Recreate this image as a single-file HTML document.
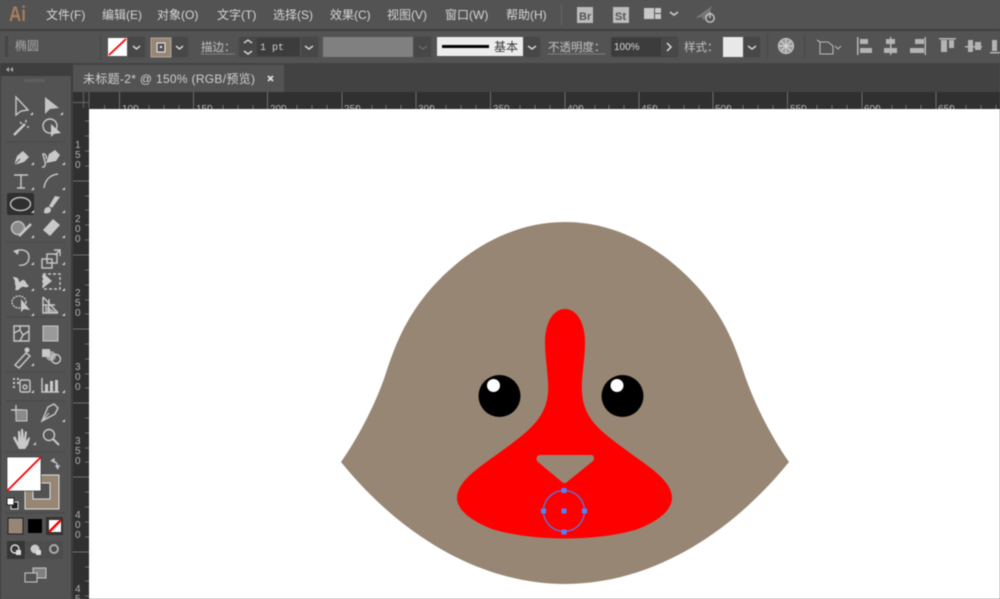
<!DOCTYPE html>
<html><head><meta charset="utf-8"><style>
html,body{margin:0;padding:0;background:#535353;width:1000px;height:599px;overflow:hidden}
svg{display:block;filter:blur(.4px)}
text{font-family:"Liberation Sans","Noto Sans CJK SC",sans-serif}
.m{font-size:12px;fill:#d6d6d6}
.c{font-size:11.5px;fill:#c4c4c4}
.r{font-size:10px;fill:#b4b4b4}
.i{fill:none;stroke:#c9c9c9;stroke-width:1.4}
.f{fill:#c9c9c9}
.d{fill:none;stroke:#d0d0d0;stroke-width:1.5}
.b{fill:#474747;stroke:#4a4a4a}
</style></head><body>
<svg width="1000" height="599" viewBox="0 0 1000 599" xmlns="http://www.w3.org/2000/svg">
<rect width="1000" height="599" fill="#fff"/>
<!-- menu bar -->
<rect width="1000" height="30" fill="#535353"/>
<rect y="29" width="1000" height="2" fill="#3f3f3f"/>
<rect y="31" width="1000" height="32" fill="#535353"/>
<rect y="63" width="1000" height="29" fill="#424242"/>
<text x="9" y="21" font-weight="bold" fill="#a87c5c" style="font-size:21px" textLength="17" lengthAdjust="spacingAndGlyphs">Ai</text>
<text class="m" x="46" y="19">文件(F)</text>
<text class="m" x="102" y="19">编辑(E)</text>
<text class="m" x="157" y="19">对象(O)</text>
<text class="m" x="217" y="19">文字(T)</text>
<text class="m" x="273" y="19">选择(S)</text>
<text class="m" x="330" y="19">效果(C)</text>
<text class="m" x="387" y="19">视图(V)</text>
<text class="m" x="445" y="19">窗口(W)</text>
<text class="m" x="506" y="19">帮助(H)</text>
<rect x="561" y="5" width="1" height="20" fill="#666"/>
<rect x="577" y="7" width="16" height="16" fill="#bcbcbc"/>
<text x="579" y="20" fill="#555" font-weight="bold" style="font-size:11px">Br</text>
<rect x="613" y="7" width="16" height="16" fill="#bcbcbc"/>
<text x="615" y="20" fill="#555" font-weight="bold" style="font-size:11px">St</text>
<rect x="644" y="8" width="10" height="11" fill="#c8c8c8"/>
<rect x="655" y="8" width="6" height="5" fill="#c8c8c8"/>
<rect x="655" y="14" width="6" height="5" fill="#c8c8c8"/>
<path class="d" d="M670 12l4 3 4-3"/>
<path d="M695 18L712 6l-4 11-5 3-1-3z" fill="#777"/>
<circle cx="710" cy="18" r="4.200" fill="none" stroke="#c4c4c4" stroke-width="1.400"/>
<path d="M710 12v6" stroke="#c4c4c4" stroke-width="1.400"/>
<!-- control bar -->
<rect x="5" y="36" width="3" height="21" fill="#454545"/>
<text x="15" y="50" fill="#a9a9a9" style="font-size:12px">椭圆</text>
<rect x="100" y="34" width="1" height="26" fill="#474747"/>
<rect x="108" y="38" width="19" height="18" fill="#fff"/>
<path d="M109 55L126 39" stroke="#f00" stroke-width="1.800"/>
<rect class="b" x="128" y="37" width="17" height="20" rx="2"/>
<path class="d" d="M133 46l3.500 3 3.500-3"/>
<rect x="151" y="38" width="20" height="19" fill="#988674" stroke="#ccc" stroke-width=".6"/>
<rect x="157" y="43" width="8" height="9" fill="#555" stroke="#eee" stroke-width="1"/>
<rect x="160" y="46" width="2" height="2" fill="#eee"/>
<rect class="b" x="172" y="37" width="16" height="20" rx="2"/>
<path class="d" d="M176 46l3.500 3 3.500-3"/>
<text class="c" x="201" y="51">描边：</text>
<path d="M201 54h33" stroke="#aaa" stroke-dasharray="1 1"/>
<rect class="b" x="239" y="37" width="79" height="20" rx="2" fill="#404040"/>
<rect x="257" y="38" width="43" height="18" fill="#3c3c3c"/>
<rect x="300" y="38" width="1" height="18" fill="#555"/>
<path class="d" d="M244 43l4-3 4 3M244 51l4 3 4-3"/>
<text x="260" y="50" fill="#d0d0d0" style="font-size:10px;font-family:'Liberation Mono',monospace">1 pt</text>
<path class="d" d="M305 46l4 3 4-3"/>
<rect x="323" y="37" width="90" height="20" fill="#808080"/>
<rect class="b" x="414" y="37" width="17" height="20"/>
<path d="M419 46l4 3 4-3" fill="none" stroke="#6c6c6c" stroke-width="1.400"/>
<rect x="437" y="37" width="86" height="19" fill="#ececec"/>
<rect x="442" y="45" width="47" height="3" fill="#000"/>
<text x="494" y="51" fill="#333" style="font-size:12px">基本</text>
<rect class="b" x="524" y="37" width="16" height="20" rx="2"/>
<path class="d" d="M528 46l4 3 4-3"/>
<text class="c" x="548" y="51">不透明度：</text>
<path d="M548 54h57" stroke="#aaa" stroke-dasharray="1 1"/>
<rect x="611" y="37" width="67" height="20" rx="2" fill="#3c3c3c" stroke="#4a4a4a"/>
<rect x="661" y="38" width="17" height="18" fill="#484848"/>
<text x="614" y="50" fill="#d8d8d8" style="font-size:10px">100%</text>
<path d="M667 43l4 4-4 4" fill="none" stroke="#ddd" stroke-width="1.500"/>
<text class="c" x="684" y="51">样式：</text>
<rect x="723" y="37" width="20" height="20" fill="#e8e8e8"/>
<rect class="b" x="744" y="37" width="16" height="20" rx="2"/>
<path class="d" d="M748 46l4 3 4-3"/>
<rect x="767" y="34" width="1" height="25" fill="#474747"/>
<circle cx="786" cy="46" r="7.500" fill="#9a9a9a" stroke="#c0c0c0" stroke-width="1.200"/>
<path d="M779 46h14M786 39v14M781 41l10 10M791 41l-10 10" stroke="#d8d8d8" stroke-width=".9"/>
<rect x="804" y="34" width="1" height="25" fill="#474747"/>
<path d="M820 42h8l5 4v8h-13zM817 40l3 2" fill="none" stroke="#b8b8b8" stroke-width="1.100"/>
<path d="M835 46l3 3 3-3" fill="none" stroke="#b8b8b8" stroke-width="1"/>
<g fill="#b4b4b4">
<rect x="857" y="37" width="1.500" height="18"/><rect x="860" y="39" width="8" height="5"/><rect x="860" y="48" width="12" height="5"/>
<rect x="890" y="37" width="1.500" height="18"/><rect x="886" y="39" width="9" height="5"/><rect x="884" y="48" width="13" height="5"/>
<rect x="924.500" y="37" width="1.500" height="18"/><rect x="915" y="39" width="9" height="5"/><rect x="910" y="48" width="14" height="5"/>
<rect x="939" y="38" width="17" height="1.500"/><rect x="941" y="40" width="6" height="12"/><rect x="949" y="40" width="5" height="8"/>
<rect x="965" y="46" width="17" height="1.500"/><rect x="968" y="40" width="5" height="12"/><rect x="975" y="42" width="6" height="8"/>
<rect x="990" y="52" width="10" height="1.500"/><rect x="992" y="40" width="5" height="11"/>
</g>
<!-- left panel -->
<rect x="0" y="63" width="73" height="536" fill="#3e3e3e"/>
<rect x="1" y="76" width="70" height="523" fill="#535353"/>
<path d="M9 67l-3 2.500 3 2.500zM13 67l-3 2.500 3 2.500z" fill="#b0b0b0"/>
<path d="M25 80.500h20" stroke="#6b6b6b" stroke-width="3" stroke-dasharray="1 1"/>
<!-- tab -->
<rect x="73" y="65" width="211" height="27" fill="#535353"/>
<text x="83" y="83" fill="#d0d0d0" style="font-size:12px" textLength="172">未标题-2* @ 150% (RGB/预览)</text>
<path d="M268 76l5 5M273 76l-5 5" stroke="#e0e0e0" stroke-width="1.800"/>
<!-- rulers -->
<rect x="73" y="92" width="927" height="17" fill="#303030"/>
<rect x="73" y="92" width="16" height="507" fill="#303030"/>
<path d="M73 102.500h16M83.500 92v16M89 92v16" stroke="#666" fill="none"/>
<g fill="none" stroke="#707070" stroke-width="1">
<path d="M119.500 92v17M193.500 92v17M267.500 92v17M342 92v17M416 92v17M490.500 92v17M565 92v17M639 92v17M713 92v17M787.500 92v17M862 92v17M936 92v17"/>
<path d="M104.500 105v4M134.500 105v4M149 105v4M164 105v4M179 105v4M208 105v4M223 105v4M238 105v4M253 105v4M282 105v4M297 105v4M312 105v4M327 105v4M357 105v4M372 105v4M386 105v4M401 105v4M431 105v4M446 105v4M461 105v4M476 105v4M505 105v4M520 105v4M535 105v4M550 105v4M580 105v4M595 105v4M609 105v4M624 105v4M654 105v4M669 105v4M684 105v4M699 105v4M728 105v4M743 105v4M758 105v4M773 105v4M802 105v4M817 105v4M832 105v4M847 105v4M877 105v4M892 105v4M906 105v4M921 105v4M951 105v4M966 105v4M981 105v4M996 105v4"/>
<path d="M73 181h16M73 255h16M73 329h16M73 403h16M73 477h16M73 552h16"/>
<path d="M85 121h4M85 136h4M85 151h4M85 166h4M85 196h4M85 210h4M85 225h4M85 240h4M85 270h4M85 285h4M85 300h4M85 314h4M85 344h4M85 359h4M85 374h4M85 388h4M85 418h4M85 433h4M85 448h4M85 462h4M85 492h4M85 507h4M85 522h4M85 537h4M85 567h4M85 581h4M85 596h4"/>
</g>
<g>
<text class="r" x="122" y="112">100</text><text class="r" x="196" y="112">150</text><text class="r" x="270" y="112">200</text><text class="r" x="344" y="112">250</text><text class="r" x="418" y="112">300</text><text class="r" x="493" y="112">350</text><text class="r" x="567" y="112">400</text><text class="r" x="641" y="112">450</text><text class="r" x="715" y="112">500</text><text class="r" x="790" y="112">550</text><text class="r" x="864" y="112">600</text><text class="r" x="938" y="112">650</text>
<text class="r" x="75" y="148">1</text><text class="r" x="75" y="158">5</text><text class="r" x="75" y="168">0</text>
<text class="r" x="75" y="222">2</text><text class="r" x="75" y="232">0</text><text class="r" x="75" y="242">0</text>
<text class="r" x="75" y="296">2</text><text class="r" x="75" y="306">5</text><text class="r" x="75" y="316">0</text>
<text class="r" x="75" y="370">3</text><text class="r" x="75" y="380">0</text><text class="r" x="75" y="390">0</text>
<text class="r" x="75" y="444">3</text><text class="r" x="75" y="454">5</text><text class="r" x="75" y="464">0</text>
<text class="r" x="75" y="518">4</text><text class="r" x="75" y="528">0</text><text class="r" x="75" y="538">0</text>
<text class="r" x="75" y="592">4</text><text class="r" x="75" y="602">5</text>
</g>
<rect x="89" y="109" width="911" height="490" fill="#fff"/>
<!-- artwork -->
<path d="M565 222C510 222 462 252 428 292C405 320 395 345 385 376C375 405 358 438 341 462C400 535 480 584 565 584C650 584 730 535 789 462C772 438 755 405 745 376C735 345 725 320 702 292C668 252 620 222 565 222Z" fill="#988674"/>
<path d="M565 309C553 309 545 323 545 342C545 360 549 378 548 392C547 408 540 420 525 433C505 450 480 465 468 477C461 484 457 491 457 498C457 510 472 522 495 530C517 536 540 538.500 565 538.500C590 538.500 613 536 635 530C658 522 672 510 672 498C672 491 668 484 661 477C649 465 624 450 604 433C589 420 583 408 582 392C581 378 585 360 585 342C585 323 577 309 565 309Z" fill="#f00"/>
<path d="M540 455H591C594 455 595 459 593 461L567 482C565 483.500 564 483.500 562 482L538 462C535 459 537 455 540 455Z" fill="#988674"/>
<circle cx="499.500" cy="396" r="21" fill="#000"/><circle cx="493.500" cy="385.500" r="6.500" fill="#fff"/>
<circle cx="622.500" cy="396" r="21" fill="#000"/><circle cx="617" cy="385.500" r="6.500" fill="#fff"/>
<circle cx="564" cy="511" r="20.500" fill="none" stroke="#4f7fe0" stroke-width="1.300"/>
<g fill="#4f83ff"><rect x="561.500" y="488" width="5" height="5"/><rect x="561.500" y="529.500" width="5" height="5"/><rect x="541" y="508.500" width="5" height="5"/><rect x="582" y="508.500" width="5" height="5"/><rect x="561.500" y="508.500" width="5" height="5"/></g>
<!-- tools -->
<rect x="7" y="193" width="27" height="22" rx="2" fill="#2f2f2f"/>
<g>
<path class="i" d="M16 97v18l5-4 7-1z"/>
<path d="M45 97v17l5-5 9-1z" fill="#c4c4c4"/>
<path d="M14 135l11-11" stroke="#c9c9c9" stroke-width="2.400"/><path class="i" d="M20 122l2 2M26 120v2.500M27 127h2"/>
<circle class="i" cx="50" cy="126" r="7"/><path class="f" d="M51 124v13l3-3 7-1z"/>
<path class="f" d="M14 165l3-9 6-5 6 6-5 5z"/><path d="M14 165l6-6" stroke="#535353"/>
<path class="i" d="M42 167c6 1 2-9 1-12s5 0 3 4"/><path class="f" d="M46 163l3-9 6-4 5 5-4 6z"/>
<path class="i" d="M14 175h14M21 175v13M17 188h8" stroke-width="2.200"/>
<path class="i" d="M44 188c1-8 6-13 14-14" stroke="#aaa"/>
<ellipse cx="20.500" cy="204" rx="10" ry="6.500" fill="none" stroke="#bbb" stroke-width="1.500"/>
<path class="f" d="M55 196l5 1-8 11-3-2z"/><path class="f" d="M44 213c0-5 2-6 5-6l2 2c0 4-3 5-7 4z"/>
<circle cx="18" cy="228" r="6.500" fill="#8a8a8a" stroke="#c0c0c0" stroke-width="1.500"/><path d="M19 236l12-12" stroke="#c9c9c9" stroke-width="2.600"/>
<path class="f" d="M43 230l10-11 7 6-10 11z"/>
<path class="i" d="M16 252c4-4 13-2 13 5s-6 9-10 8" stroke-width="1.600"/><path class="f" d="M13 251l6-2-1 6z"/>
<rect class="i" x="42" y="259" width="10" height="9"/><rect class="i" x="47" y="254" width="10" height="9"/><path class="i" d="M54 250h6v6M60 250l-5 5"/>
<path class="f" d="M13 277c3 0 6 1 6 4s3-2 5-1 2 4 5 6c-3 3-5 0-7 1-3 1-2 4-7 3 2-4-1-6 0-9-1-2-2-3-2-4z"/>
<path class="i" d="M43 274h17v15H43z" stroke-dasharray="3 2"/><path class="f" d="M43 273v15l9-7z"/>
<ellipse class="i" cx="19" cy="302" rx="7" ry="6" stroke-dasharray="2 1"/><path class="f" d="M21 299v13l3-3 6 1z"/>
<path class="i" d="M43 297v16h15M43 297l15 16M43 305h12M49 299v14"/><path class="f" d="M45 305l13 8H45z" opacity=".7"/>
<path class="i" d="M14 326h15v15H14z"/><path class="i" d="M14 333l6-3 3 5 6-4M20 326l0 4M23 335l-3 6"/>
<rect x="43" y="326" width="15" height="15" fill="#9a9a9a" stroke="#c9c9c9"/>
<path class="i" d="M15 365l11-12 4 3-11 12z" stroke-width="1.600"/><circle class="f" cx="27" cy="350" r="2.500"/>
<rect class="f" x="42" y="349" width="8" height="8"/><circle class="f" cx="51" cy="356" r="5" opacity=".7"/><circle class="i" cx="56" cy="359" r="4.500"/>
<rect class="i" x="20" y="380" width="10" height="12" rx="1.500"/><circle class="i" cx="25" cy="387" r="2"/>
<path d="M13 379h2M17 379h2M13 383h2M17 383h2M13 387h2" stroke="#c9c9c9" stroke-width="2"/>
<path class="i" d="M42 378v14h17"/><rect class="f" x="45" y="384" width="3" height="8"/><rect class="f" x="50" y="381" width="3" height="11"/><rect class="f" x="55" y="380" width="3" height="12"/>
<path class="i" d="M11 410h12M16 405v10"/><rect x="16" y="410" width="11" height="11" fill="#8a8a8a" stroke="#c9c9c9"/>
<path class="i" d="M42 421l6-14 6-3 4 4-3 6z"/><path d="M42 421l7-8" stroke="#c9c9c9"/>
<path class="f" d="M15 436l3 6 0-11 2 0 1 8 0-10 2 0 1 10 1-8 2 1-1 9 3-4 1 1-2 7-3 4h-6l-6-11z"/>
<circle class="i" cx="49" cy="435" r="5.500" stroke-width="1.500"/><path d="M53 439l6 6" stroke="#c9c9c9" stroke-width="2"/>
</g>
<g fill="#d5d5d5">
<path d="M30 115h3v-3zM60 115h3v-3zM31 165h3v-3zM62 165h3v-3zM31 190h3v-3zM62 190h3v-3zM31 213h3v-3zM62 213h3v-3zM31 238h3v-3zM62 238h3v-3zM31 265h3v-3zM62 265h3v-3zM31 291h3v-3zM62 291h3v-3zM31 316h3v-3zM62 316h3v-3zM31 366h3v-3zM31 393h3v-3zM62 393h3v-3zM62 422h3v-3zM33 445h3v-3z"/>
</g>
<path d="M6 142h59M6 242h59M6 317h59M6 372h59M6 401h59M6 452h59M6 513h59" stroke="#474747"/>
<!-- fill & stroke -->
<rect x="25" y="475" width="34" height="34" fill="#988674" stroke="#e0e0e0"/>
<rect x="33" y="483" width="17" height="16" fill="#535353" stroke="#e0e0e0"/>
<rect x="7" y="457" width="34" height="34" fill="#fff" stroke="#222" stroke-width=".6"/>
<path d="M7 491L41 457" stroke="#f00" stroke-width="1.800"/>
<path d="M51 461c4 0 7 2 7 8M51 461l3-2v4M58 469l-2-3h4" fill="none" stroke="#c9c9c9" stroke-width="1.200"/>
<rect x="11" y="502" width="7" height="7" fill="#222" stroke="#ddd"/>
<rect x="7" y="498" width="7" height="7" fill="#fff" stroke="#222"/>
<rect x="8" y="518" width="15" height="16" fill="#988674" stroke="#222"/>
<rect x="28" y="519" width="14" height="14" fill="#000"/>
<rect x="46" y="517" width="17" height="18" fill="#333"/>
<rect x="49" y="520" width="12" height="12" fill="#fff"/>
<path d="M49 532L61 520" stroke="#f00" stroke-width="2.500"/>
<rect x="7" y="541" width="18" height="18" fill="#363636"/>
<rect x="26" y="541" width="18" height="18" fill="#4c4c4c"/>
<rect x="45" y="541" width="18" height="18" fill="#4c4c4c"/>
<circle cx="15" cy="549" r="4" fill="none" stroke="#ddd" stroke-width="1.400"/><rect x="16" y="550" width="5" height="5" fill="#ddd"/>
<circle cx="35" cy="549" r="4.500" fill="#c9c9c9"/><rect x="36" y="550" width="5" height="5" fill="#ddd"/>
<circle cx="54" cy="549" r="4" fill="none" stroke="#aaa" stroke-width="2"/>
<rect x="33" y="568" width="13" height="10" fill="#808080" stroke="#c9c9c9"/>
<rect x="25" y="573" width="12" height="9" fill="#535353" stroke="#c9c9c9"/>
</svg>
</body></html>
